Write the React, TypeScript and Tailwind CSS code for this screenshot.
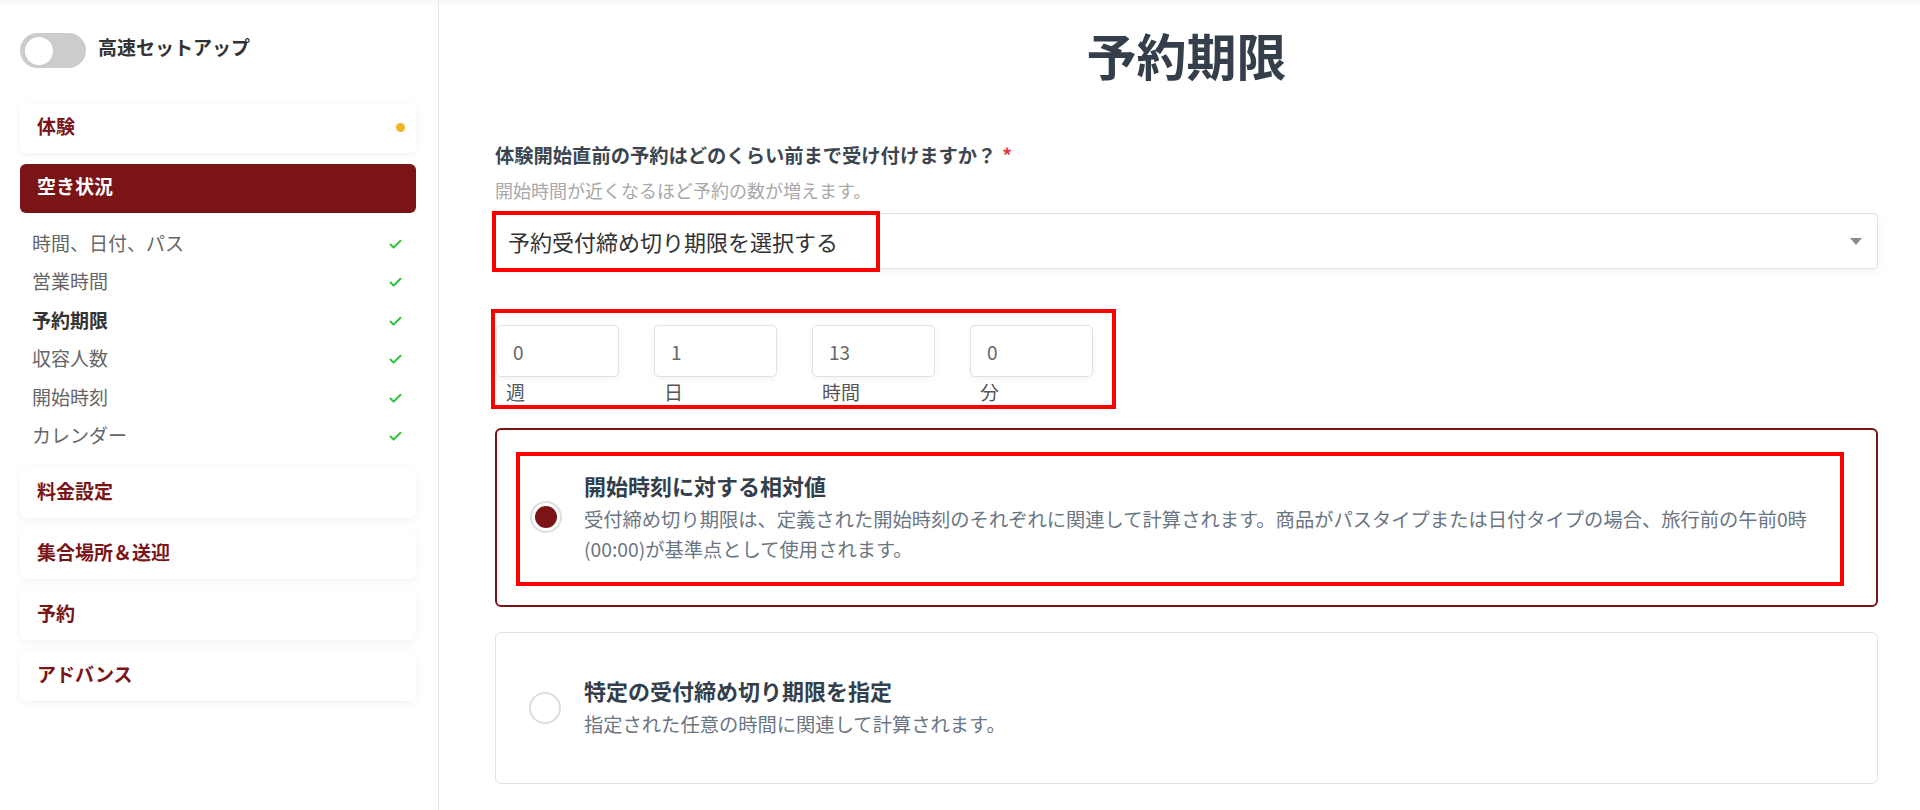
import React from "react";
import { Check } from "lucide-react";

const subItems = [
  { label: "時間、日付、パス", active: false },
  { label: "営業時間", active: false },
  { label: "予約期限", active: true },
  { label: "収容人数", active: false },
  { label: "開始時刻", active: false },
  { label: "カレンダー", active: false },
];

const lowerSections = ["料金設定", "集合場所＆送迎", "予約", "アドバンス"];

const units = [
  { value: "0", unit: "週" },
  { value: "1", unit: "日" },
  { value: "13", unit: "時間" },
  { value: "0", unit: "分" },
];

function SectionCard({ title, dot }: { title: string; dot?: boolean }) {
  return (
    <div className="flex h-[50px] items-center justify-between rounded-[6px] bg-white pl-[17px] pr-[11px] shadow-[0_2px_10px_rgba(0,0,0,0.06)]">
      <span className="mb-[6px] text-[19px] font-bold leading-none text-[#7b1416]">{title}</span>
      {dot && <span className="mb-[2px] h-[9px] w-[9px] rounded-full bg-[#f0b429]" />}
    </div>
  );
}

function Sidebar() {
  return (
    <aside className="flex w-[439px] shrink-0 flex-col border-r border-[#e6e6e6] pl-[20px] pr-[22px] pt-[33px]">
      <div className="flex h-[35px] items-center gap-[12px]">
        <div className="flex h-[35px] w-[66px] items-center rounded-full bg-[#cccccc] px-[5px]">
          <div className="h-[28px] w-[28px] rounded-full bg-white" />
        </div>
        <span className="mb-[9px] text-[19px] font-bold leading-none text-[#333]">高速セットアップ</span>
      </div>

      <div className="mt-[35px] flex flex-col gap-[11px]">
        <SectionCard title="体験" dot />
        <div className="flex h-[49px] items-center rounded-[6px] bg-[#7b1416] pl-[17px]">
          <span className="mb-[6px] text-[19px] font-bold leading-none text-white">空き状況</span>
        </div>
        <ul className="flex flex-col py-[1px]">
          {subItems.map((item) => (
            <li
              key={item.label}
              className="flex h-[38.5px] items-center justify-between pl-[12px] pr-[13px]"
            >
              <span
                className={
                  item.active
                    ? "mb-[4px] text-[19px] font-bold leading-none text-[#333]"
                    : "mb-[4px] text-[19px] leading-none text-[#666]"
                }
              >
                {item.label}
              </span>
              <Check size={15} strokeWidth={3.2} className="text-[#2ec13f]" />
            </li>
          ))}
        </ul>
        {lowerSections.map((s) => (
          <SectionCard key={s} title={s} />
        ))}
      </div>
    </aside>
  );
}

function Radio({ checked }: { checked: boolean }) {
  return (
    <div className="flex h-[32px] w-[32px] shrink-0 items-center justify-center rounded-full border-[2px] border-[#dddddd] bg-white">
      {checked && <div className="h-[22px] w-[22px] rounded-full bg-[#7b1416]" />}
    </div>
  );
}

function Main() {
  return (
    <main className="flex min-w-0 flex-1 flex-col pl-[56px] pr-[42px]">
      <h1 className="mt-[24px] text-center text-[50px] font-bold leading-[60px] text-[#343f4b]">
        予約期限
      </h1>

      <label className="mt-[58px] text-[19.3px] font-bold leading-[26px] text-[#3c4650]">
        体験開始直前の予約はどのくらい前まで受け付けますか？
        <span className="ml-[6px] text-[#e53935]">*</span>
      </label>
      <p className="mt-[10px] text-[18px] leading-[24px] text-[#a8a8a8]">
        開始時間が近くなるほど予約の数が増えます。
      </p>

      <div className="relative mt-[11px] flex h-[56px] items-center justify-between rounded-[4px] border border-[#e0e0e0] bg-white pl-[12px] pr-[15px] shadow-[0_3px_8px_rgba(0,0,0,0.05)]">
        <span className="text-[22px] leading-none text-[#333]">予約受付締め切り期限を選択する</span>
        <svg width="12" height="7" viewBox="0 0 12 7" className="text-[#8a8a8a]">
          <path d="M0 0 L12 0 L6 7 Z" fill="currentColor" />
        </svg>
        <div className="pointer-events-none absolute left-[-4px] top-[-3px] h-[61px] w-[388px] border-[4px] border-[#ff0000]" />
      </div>

      <div className="ml-[-4px] mt-[40px] w-[625px] border-[4px] border-[#ff0000] pb-[2px] pl-[1px] pt-[12px]">
        <div className="flex gap-[35px]">
          {units.map((u) => (
            <div key={u.unit} className="flex w-[123px] flex-col">
              <div className="flex h-[52px] items-center rounded-[5px] border border-[#e2e2e2] bg-white pl-[16px] shadow-[0_2px_6px_rgba(0,0,0,0.05)]">
                <span className="text-[19px] leading-none text-[#666]">{u.value}</span>
              </div>
              <span className="mt-[4px] pl-[10px] text-[19px] leading-[22px] text-[#555]">{u.unit}</span>
            </div>
          ))}
        </div>
      </div>

      <div className="mt-[19px] rounded-[6px] border-[2px] border-[#7b1416] pb-[19px] pl-[19px] pr-[32px] pt-[22px]">
        <div className="flex items-center gap-[22px] border-[4px] border-[#ff0000] pb-[18px] pl-[10px] pt-[14px]">
          <Radio checked />
          <div className="flex flex-col">
            <span className="text-[22px] font-bold leading-[30px] text-[#343f4b]">
              開始時刻に対する相対値
            </span>
            <span className="mt-[4px] whitespace-nowrap text-[19.3px] leading-[30px] text-[#6b7683]">
              受付締め切り期限は、定義された開始時刻のそれぞれに関連して計算されます。商品がパスタイプまたは日付タイプの場合、旅行前の午前0時
            </span>
            <span className="whitespace-nowrap text-[19.3px] leading-[30px] text-[#6b7683]">
              (00:00)が基準点として使用されます。
            </span>
          </div>
        </div>
      </div>

      <div className="mt-[25px] flex h-[152px] items-center gap-[23px] rounded-[6px] border border-[#e2e2e2] pl-[33px]">
        <Radio checked={false} />
        <div className="mb-[2px] flex flex-col">
          <span className="text-[22px] font-bold leading-[30px] text-[#343f4b]">
            特定の受付締め切り期限を指定
          </span>
          <span className="mt-[4px] text-[19.3px] leading-[30px] text-[#6b7683]">
            指定された任意の時間に関連して計算されます。
          </span>
        </div>
      </div>
    </main>
  );
}

export default function App() {
  return (
    <div className="flex h-[810px] w-full overflow-hidden bg-white font-['Noto_Sans_CJK_JP',sans-serif] shadow-[inset_0_10px_10px_-10px_rgba(0,0,0,0.08)]">
      <Sidebar />
      <Main />
    </div>
  );
}
